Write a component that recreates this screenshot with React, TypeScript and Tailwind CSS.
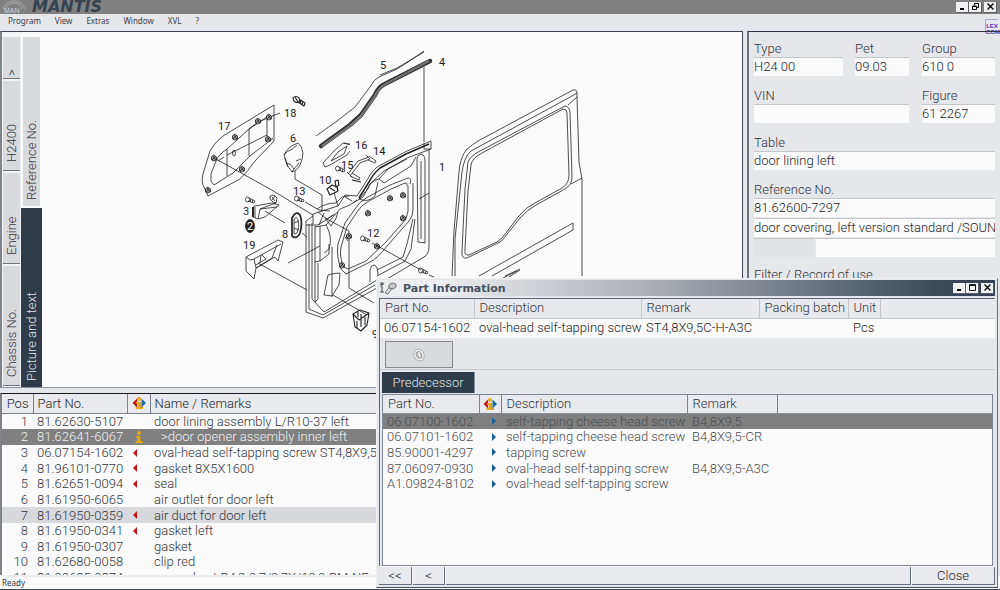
import React, { useId } from 'react';

type Mark = 'info' | 'prev' | 'next' | 'none';

const parts: { pos: string; no: string; mark: Mark; name: string }[] = [
  { pos: '1', no: '81.62630-5107', mark: 'none', name: 'door lining assembly L/R10-37 left' },
  { pos: '2', no: '81.62641-6067', mark: 'info', name: '>door opener assembly inner left' },
  { pos: '3', no: '06.07154-1602', mark: 'prev', name: 'oval-head self-tapping screw ST4,8X9,5C' },
  { pos: '4', no: '81.96101-0770', mark: 'prev', name: 'gasket 8X5X1600' },
  { pos: '5', no: '81.62651-0094', mark: 'prev', name: 'seal' },
  { pos: '6', no: '81.61950-6065', mark: 'none', name: 'air outlet for door left' },
  { pos: '7', no: '81.61950-0359', mark: 'prev', name: 'air duct for door left' },
  { pos: '8', no: '81.61950-0341', mark: 'prev', name: 'gasket left' },
  { pos: '9', no: '81.61950-0307', mark: 'none', name: 'gasket' },
  { pos: '10', no: '81.62680-0058', mark: 'none', name: 'clip red' },
  { pos: '11', no: '81.90685-0374', mark: 'none', name: 'expand nut B4,2-9,7/9,7X/10,0-BM-NF' },
];

const predecessors = [
  { no: '06.07100-1602', name: 'self-tapping cheese head screw', remark: 'B4,8X9,5' },
  { no: '06.07101-1602', name: 'self-tapping cheese head screw', remark: 'B4,8X9,5-CR' },
  { no: '85.90001-4297', name: 'tapping screw', remark: '' },
  { no: '87.06097-0930', name: 'oval-head self-tapping screw', remark: 'B4,8X9,5-A3C' },
  { no: 'A1.09824-8102', name: 'oval-head self-tapping screw', remark: '' },
];

function InfoGlyph() {
  return (
    <g>
      <circle cx="7" cy="2" r="2" fill="#e3ab1c" />
      <path d="M4 5h4.500v5H11v2H3.500v-2H5.500V6.500H4z" fill="#e3ab1c" />
      <path d="M8.500 5v5H11" fill="none" stroke="#a37a22" strokeWidth="0.600" />
    </g>
  );
}

function MarkIcon({ kind }: { kind: Mark | 'both' }) {
  if (kind === 'none') return null;
  return (
    <svg viewBox="0 0 14 12" className="mx-auto block h-3 w-3.5" aria-hidden="true">
      {kind === 'both' && (
        <>
          <path d="M5 1.500v9L.500 6z" fill="#c4161c" />
          <path d="M9.500 1.500v9L14 6z" fill="#1b6fa0" />
        </>
      )}
      {kind === 'prev' && <path d="M5 2v8L1 6z" fill="#c4161c" />}
      {kind === 'next' && <path d="M9 2v8l4-4z" fill="#175f94" />}
      {(kind === 'info' || kind === 'both') && <InfoGlyph />}
    </svg>
  );
}

function WindowButtons({ restore = false }: { restore?: boolean }) {
  const box =
    'flex h-[11px] w-[13px] items-center justify-center border-r border-b border-[#5d6167] bg-[#f0f0f0]';
  return (
    <div className="flex shrink-0 items-center">
      <button className={box} aria-label="Minimize">
        <svg viewBox="0 0 9 9" className="h-[9px] w-[9px]"><path d="M2 6h4v2H2z" /></svg>
      </button>
      <button className={box} aria-label="Restore">
        <svg viewBox="0 0 9 9" className="h-[9px] w-[9px]">
          {restore ? (
            <path d="M3.500 3V1.500h4v4H6M3.500 1.500h4M1.500 4.500h4v3h-4zM1.500 4h4" fill="none" stroke="#000" />
          ) : (
            <path d="M1.500 1.500h6v6h-6zM1.500 2.500h6" fill="none" stroke="#000" strokeWidth="0.900" />
          )}
        </svg>
      </button>
      <button className={`${box} ml-0.5`} aria-label="Close window">
        <svg viewBox="0 0 9 9" className="h-[9px] w-[9px]"><path d="M1.500 1.500l6 6M7.500 1.500l-6 6" fill="none" stroke="#000" strokeWidth="1.300" /></svg>
      </button>
    </div>
  );
}

function SideTab({ label, className }: { label: string; className: string }) {
  return (
    <button
      className={`flex items-center justify-start whitespace-nowrap text-[13px] leading-4 [writing-mode:vertical-rl] rotate-180 ${className}`}
    >
      {label}
    </button>
  );
}

const inputClass =
  'block h-[19px] w-full min-w-0 border-t border-[#c3c5c8] bg-[#fbfbfb] pb-0.5 text-[13px] leading-4 text-[#222429] outline-none';

function Field({ label, value, className = '' }: { label: string; value: string; className?: string }) {
  const id = useId();
  return (
    <div className={`min-w-0 ${className}`}>
      <label htmlFor={id} className="block h-[17px] text-[13px] leading-[17px] text-[#33363b]">{label}</label>
      <input id={id} defaultValue={value} className={inputClass} />
    </div>
  );
}

function Screw({ x, y }: { x: number; y: number }) {
  return (
    <g transform={`translate(${x} ${y})`}>
      <ellipse cx="1.500" cy="1.500" rx="2" ry="2.500" />
      <path d="M3 0l6 3-1 2-6-2M5 1l-1 3M7 2l-1 3" />
    </g>
  );
}

function Bolt({ x, y }: { x: number; y: number }) {
  return (
    <g transform={`translate(${x} ${y})`}>
      <path d="M-2.500-1l2-2 3 2v3l-3 1-2-1z" fill="#999" />
      <path d="M-2 2l4-4M-1-2l3 4" />
    </g>
  );
}

function Drawing() {
  const labels: [string, number, number][] = [
    ['17', 218, 131], ['18', 284, 118], ['6', 290, 143], ['13', 293, 196], ['3', 243, 216],
    ['8', 282, 239], ['19', 243, 250], ['5', 380, 70], ['4', 439, 67], ['16', 355, 150],
    ['14', 373, 156], ['15', 341, 170], ['10', 319, 185], ['1', 439, 172], ['12', 367, 238], ['9', 372, 339],
  ];
  return (
    <svg viewBox="0 0 700 355" className="block h-[355px] w-[700px] shrink-0" role="img" aria-label="Exploded view of the door lining">
      <g transform="translate(-42 -33)" fill="none" stroke="#222" strokeWidth="0.800" strokeLinejoin="round">
        <path d="M274 106L223 137Q214 144 210 152L203 175Q201 184 204 188L208 197L240 180Q248 172 255 162L274 142V106" />
        <path d="M267 118L249 130L227 150Q218 156 216 162L211 175V182L214 186L233 174L250 157L268 143L273 139M267 118V137M249 130V157M227 150V177M218 162L224 158M227 156L267 136M249 130L258 123L280 114" />
        <ellipse cx="234" cy="154" rx="1.500" ry="3" />
        <Bolt x={258} y={122} /><Bolt x={269} y={118} /><Bolt x={235} y={138} /><Bolt x={214} y={159} />
        <Bolt x={268} y={140} /><Bolt x={242} y={170} /><Bolt x={208} y={191} />
        <path d="M216 160L270 190L313 216" />
        <path d="M293 99q3-3 6 0l1 3q-3 3-6 0zM295 98l3 5M299 100l6 4-1 3-6-4M301 101l-1 4M303 102l-1 4" strokeWidth="1.100" />
        <path d="M298 144Q288 147 284 156L287 166L292 173Q297 172 300 166Q303 159 303 154Q302 147 298 144M284 156Q288 151 291 151L297 146M286 164Q291 164 294 170L299 164M294 170L292 173M285 159L288 168M296 162L301 160" />
        <path d="M295 172V180L322 196V212" />
        <Screw x={246} y={199} /><Screw x={295} y={198} />
        <path d="M305 203L319 211L330 212" />
        <path d="M270 197l4-1 3 3-1 5-3-1-3-3zM272 198l3 4M275 197l-3 4" />
        <path d="M253 208V218L258 220L265 218L279 206L272 204L255 207zM255 208V219M258 220L260 210L276 204M260 210L277 208M265 212L285 224" />
        <path d="M253 208V218" strokeWidth="2" />
        <ellipse cx="250" cy="227" rx="4.500" ry="6.500" fill="#222" />
        <path d="M292 237V219Q296 211 300 216Q303 224 300 234Q297 241 292 237z" strokeWidth="1.700" />
        <path d="M294 235V220Q297 217 298 221Q300 228 297 234zM294 224l5-2M294 229l5 2M302 234L307 238" />
        <path d="M246 258Q259 251 278 241L283 243L278 262L275 258L256 269L254 280L246 272zM246 258L250 261L254 260L281 245M254 260L256 269L272 259L277 246M261 256L260 264M256 266L266 260L262 256M258 264L307 291" />
        <path d="M288 264L320 247" />

        <path d="M424 52L421 54L408 63L397 70L379 78Q374 80 370 88L355 108L337 122L316 137M424 53L409 62L397 69L380 76" />
        <path d="M430 62L383 86Q378 89 375 96L361 116L350 126L321 147" strokeWidth="4.500" stroke="#333" strokeLinecap="round" />
        <path d="M429 62L384 86Q379 89 375 97L361 117L350 127L322 147" strokeWidth="1.800" stroke="#aaa" />
        <path d="M429 62L384 86Q379 89 375 97L361 117L350 127L322 147" strokeWidth="0.700" stroke="#333" />
        <path d="M424 68V143" />
        <path d="M350 145L343 144L334 152L323 164L325 168L330 166L347 156L350 152M347 147L338 153L331 162L344 155zM344 144L350 146" />
        <Screw x={336} y={168} />
        <path d="M348 175L358 162L369 158M350 177L360 164L370 160M347 173l5 5M352 174l8 5-1 2-9-4M366 156l4 4M369 157l7 5-1 2-7-3" />
        <path d="M352 181L361 183M327 190l5-4 5 2 1 4-8 4zM335 182l3-1 1 5-3 2zM330 189l5 3" strokeWidth="1.200" />
        <path d="M334 194L338 207" />

        <path d="M431 142L407 152L377 168Q371 173 367 181L357 197M431 142V150L407 159L384 172L370 185L363 198L353 204" />
        <path d="M429 145L406 155L380 169Q373 175 369 183L359 199" strokeWidth="1.500" />
        <path d="M424 144V150M424 150H431M429 151V248Q429 255 424 258L377 286M417 160Q417 156 421 155Q425 156 425 162V244L418 243L417 160M421 162V240M410 185Q412 179 408 179L390 186L366 199Q359 203 355 210L345 224L338 245Q336 257 341 270L346 275L370 263Q377 260 388 246L409 222Q413 218 413 210V184M407 187Q408 184 405 184L391 190L369 202Q361 206 357 213L347 228L341 248Q339 258 344 268L348 270L366 262L386 243L406 220L408 212V187" />
        <path d="M407 160L388 170L379 180L384 184L411 167L416 158M379 180Q370 182 368 190L359 200Q368 204 375 197L378 183M345 198L352 202" />
        <path d="M357 197L345 196L338 207L325 211L313 215V225M357 201L350 206L340 210L326 226L315 228" />
        <path d="M313 217L306 222V313L323 319L377 289M309 225V310L323 316L375 286M312 224V300L324 313L377 281M315 227V263L320 262L329 255V245M320 227V262M326 226Q333 238 329 250L324 254M315 263V303L318 300V264M332 248V298M306 226H318L335 215M325 219L349 232V289L374 304M345 238L348 242M324 214L319 226" />
        <path d="M338 213Q337 220 331 227L325 219M328 276L324 296L332 297L339 286L340 274Q334 274 328 276M333 296L367 316" />
        <path d="M413 220L407 245L403 258L377 271M415 220L411 250L405 262L377 277M370 283V271Q371 266 374 266Q378 267 378 276M429 194L419 200" />
        <path d="M317 210Q325 204 336 204L342 198L349 197M318 213L327 220L333 216" />
        <Bolt x={368} y={214} /><Bolt x={390} y={199} /><Bolt x={403} y={196} /><Bolt x={403} y={219} />
        <Bolt x={377} y={247} /><Bolt x={342} y={266} /><Bolt x={349} y={237} />
        <Screw x={361} y={238} /><Screw x={419} y={270} />
        <path d="M372 244L421 271M429 276L434 278" />
        <path d="M353 315L360 311L369 314L367 326L361 332L355 328zM353 315L359 321L369 314M358 313V318M361 315V328M357 322V329M365 318V326" strokeWidth="1.100" />

        <path d="M452 277L454 232L459 173Q460 158 467 150Q472 146 478 142L573 91Q577 90 577 94V98L568 106M455 277V240L462 173Q464 158 471 152L572 97L577 94M577 98L579 163L582 180V277M571 185L582 179" />
        <path d="M565 107L480 152Q470 157 468 163L465 190L462 252Q461 260 467 259L500 243Q504 240 508 234L520 219Q527 211 536 206L565 190Q572 186 572 178L570 113Q569 107 565 107" />
        <path d="M563 110L482 154Q472 159 471 166L468 192L465 250Q464 257 469 256L497 243Q502 240 506 234L518 218Q526 208 535 204L562 189Q569 185 569 176L567 114Q567 110 563 110" />
        <path d="M479 277L573 224V231L492 277M505 277L520 270M509 278L520 271M503 279L517 272" />
      </g>
      <g transform="translate(-42 -33)" className="fill-[#222] font-['Roboto'] text-[11px] font-normal">
        {labels.map(([t, x, y]) => (
          <text key={t} x={x} y={y}>{t}</text>
        ))}
        <text x="247" y="231" className="fill-white">2</text>
      </g>
    </svg>
  );
}

function PartInformation() {
  const head = 'border-r border-[#c5c7cb] p-0 pb-0.5 pl-[5px] text-left font-light';
  const head2 = 'border-r border-b border-[#7a8291] border-b-[#8b90a0] p-0 pl-[5px] text-left font-light';
  const nav =
    'flex h-[18px] items-center justify-center border-r border-b border-[#65707e] bg-[#e9eaed] text-[#222429]';
  return (
    <section
      role="dialog"
      aria-label="Part Information"
      className="absolute top-[278px] right-0.5 bottom-0.5 left-[376px] flex flex-col border border-[#eef0f3] border-r-[#687080] border-b-[#424c5e] bg-[#e6e7eb] p-0.5 pt-px"
    >
      <header className="flex h-4 shrink-0 items-center bg-linear-to-r from-[#eceef0] from-10% via-[#a9adb3] via-45% to-[#344252] to-95% pr-px">
        <svg viewBox="0 0 18 14" className="h-3.5 w-[18px]" aria-hidden="true">
          <path d="M1 5h2v6M1 11h4M2 2h2v1.500H2z" fill="none" stroke="#555" strokeWidth="1.200" />
          <path d="M6 12l5-7 3 1-5 7z" fill="#ddd" stroke="#777" />
          <path d="M10 4l3-2 4 1v3l-3 2-4-1z" fill="#c8c8c8" stroke="#777" />
        </svg>
        <h2 className="ml-1.5 flex-1 font-['DejaVu_Sans'] text-[11px] font-bold text-[#47505c]">Part Information</h2>
        <WindowButtons />
      </header>
      <div className="mt-0.5 flex min-h-0 flex-1 flex-col border-t border-l border-[#5d647b]">
        <table className="w-full shrink-0 table-fixed border-collapse bg-[#fbfbfb]">
          <colgroup>
            <col className="w-[94px]" /><col className="w-[167px]" /><col className="w-[118px]" /><col className="w-[89px]" /><col className="w-8" /><col />
          </colgroup>
          <thead>
            <tr className="h-[19px] border-b border-[#c5c7cb] bg-[#e8e9ec]">
              <th className={head}>Part No.</th>
              <th className={head}>Description</th>
              <th className={head}>Remark</th>
              <th className={`${head} whitespace-nowrap`}>Packing batch</th>
              <th className={head}>Unit</th>
              <th className="p-0" />
            </tr>
          </thead>
          <tbody>
            <tr className="h-5 whitespace-nowrap text-[#222429]">
              <td className="p-0 pb-0.5 pl-1">06.07154-1602</td>
              <td className="p-0 pb-0.5 pl-[5px]">oval-head self-tapping screw</td>
              <td className="p-0 pb-0.5 pl-[5px]">ST4,8X9,5C-H-A3C</td>
              <td className="p-0" />
              <td className="p-0 pb-0.5 pl-[5px]">Pcs</td>
              <td className="p-0" />
            </tr>
          </tbody>
        </table>
        <div className="shrink-0 border-b border-[#c8cacd] pt-[3px] pb-px pl-[5px]">
          <button aria-label="Show record" className="flex h-[27px] w-[68px] items-center justify-center border border-[#858990] bg-[#d9dadc]">
            <svg viewBox="0 0 14 14" className="h-3.5 w-3.5">
              <ellipse cx="7" cy="7" rx="5" ry="6" fill="#f5f5f5" stroke="#b4b4b4" transform="rotate(-30 7 7)" />
              <ellipse cx="7" cy="7" rx="2.500" ry="3.500" fill="#ccc" stroke="#999" transform="rotate(-30 7 7)" />
              <path d="M7 4l1 5" stroke="#fff" />
            </svg>
          </button>
        </div>
        <div className="shrink-0 pt-0.5 pl-0.5">
          <button className="block h-[21px] w-[93px] border-r border-[#8c93a0] bg-[#2f3b48] text-[#dfe2e6]">Predecessor</button>
        </div>
        <div className="mx-0.5 mt-px min-h-0 flex-1 border border-[#80869a] bg-[#fbfbfb]">
          <table className="w-full table-fixed border-collapse">
            <colgroup>
              <col className="w-24" /><col className="w-[22px]" /><col className="w-[186px]" /><col className="w-[90px]" /><col />
            </colgroup>
            <thead>
              <tr className="h-[18px] bg-[#e9eaed]">
                <th className={head2}>Part No.</th>
                <th className="border-r border-b border-[#7a8291] p-0"><MarkIcon kind="both" /></th>
                <th className={head2}>Description</th>
                <th className={head2}>Remark</th>
                <th className="border-b border-[#8b90a0] p-0" />
              </tr>
            </thead>
          </table>
          <table className="h-[78px] w-full table-fixed border-collapse text-[#4a4d52]">
            <colgroup>
              <col className="w-24" /><col className="w-[22px]" /><col className="w-[186px]" /><col className="w-[90px]" /><col />
            </colgroup>
            <tbody>
              {predecessors.map((p, i) => (
                <tr key={p.no} className={i === 0 ? 'bg-[#808080]' : ''}>
                  <td className="p-0 pl-1 whitespace-nowrap">{p.no}</td>
                  <td className="p-0"><MarkIcon kind="next" /></td>
                  <td className="p-0 pl-[5px] whitespace-nowrap">{p.name}</td>
                  <td className="p-0 pl-[5px] whitespace-nowrap">{p.remark}</td>
                  <td className="p-0" />
                </tr>
              ))}
            </tbody>
          </table>
        </div>
      </div>
      <footer className="flex shrink-0 gap-px bg-[#fbfbfb] pt-px">
        <button className={`${nav} w-[33px]`}>&lt;&lt;</button>
        <button className={`${nav} w-8`}>&lt;</button>
        <div className="flex-1 border-r border-b border-[#65707e] bg-[#e9eaed]" />
        <button className={`${nav} w-[83px]`}>Close</button>
      </footer>
    </section>
  );
}

export default function App() {
  const th = 'border-r border-b border-[#7a8291] p-0 font-light text-[#222429]';
  return (
    <div className="relative flex h-screen flex-col overflow-hidden bg-[#e6e7eb] font-['Roboto','Liberation_Sans',sans-serif] text-[13px] leading-[15px] font-light text-[#33363b]">
      <header className="flex h-3.5 shrink-0 items-center bg-[#808080] pr-[3px]">
        <svg viewBox="0 0 26 14" className="ml-0.5 h-3.5 w-[26px] shrink-0" role="img" aria-label="MAN">
          <path d="M1 9Q4 1 12 1t11 8M4 9Q6 3 12 3t8 6" fill="none" stroke="#b9b9b9" strokeWidth="0.800" />
          <text x="2" y="13" fontSize="7" className="fill-[#d0d0d0] font-['Liberation_Sans']">MAN</text>
        </svg>
        <h1 className="ml-1 flex-1 font-['DejaVu_Sans'] text-[16px] leading-5 font-bold text-[#36424f] italic">MANTIS</h1>
        <WindowButtons restore />
      </header>
      <div className="flex h-[17px] shrink-0 items-start justify-between">
        <nav className="flex gap-3.5 pl-2 font-['Noto_Sans'] text-[8px] leading-[13px] font-normal text-[#3c4046]">
          <button>Program</button>
          <button>View</button>
          <button>Extras</button>
          <button>Window</button>
          <button>XVL</button>
          <button>?</button>
        </nav>
        <div className="mt-[5px] mr-0.5 h-[15px] w-[13px] shrink-0 border-t border-l border-[#a9a3dc] pt-[3px] text-center font-['Liberation_Sans'] text-[6px] leading-[6px] font-bold text-[#4a2fb5]">
          LEX COM
        </div>
      </div>
      <div className="flex min-h-0 flex-1">
        <div className="flex min-w-0 flex-1 flex-col">
          <section className="flex h-[357px] shrink-0 overflow-hidden border border-l-2 border-[#3a4252] border-b-[#8b95a2] border-l-[#808388] bg-[#fbfbfb]">
            <div className="flex w-[19px] shrink-0 flex-col gap-0.5 bg-[#f2f3f5] px-px pt-[5px] pb-px">
              <SideTab label=">" className="h-[42px] w-[17px] border-t border-[#6d737c] bg-[#d9dadd] pt-0.5" />
              <SideTab label="H2400" className="h-[90px] w-[17px] border-t border-[#6d737c] bg-[#d9dadd] pt-2" />
              <SideTab label="Engine" className="h-[91px] w-[17px] border-t border-[#6d737c] bg-[#d9dadd] pt-2" />
              <SideTab label="Chassis No." className="w-[17px] flex-1 border-t border-[#6d737c] bg-[#d9dadd] pt-2" />
            </div>
            <div className="flex w-[21px] shrink-0 flex-col pt-[5px]">
              <SideTab label="Reference No." className="ml-0.5 h-[169px] w-[17px] bg-[#d9dadd] pt-1.5" />
              <SideTab label="Picture and text" className="mt-0.5 w-full flex-1 bg-[#2f3b48] pt-1.5 text-[#e4e6ea]" />
            </div>
            <Drawing />
          </section>
          <section className="mt-[5px] flex min-h-0 flex-1 flex-col overflow-hidden border-t border-r border-l-2 border-t-[#15181d] border-r-[#5d647b] border-l-[#808388] bg-[#fbfbfb]">
            <table className="w-full shrink-0 table-fixed border-collapse">
              <colgroup><col className="w-[31px]" /><col className="w-[94px]" /><col className="w-[23px]" /><col /></colgroup>
              <thead>
                <tr className="h-[19px] bg-[#e9eaed]">
                  <th className={`${th} pr-1 text-right`}>Pos</th>
                  <th className={`${th} pl-1 text-left`}>Part No.</th>
                  <th className={th}><MarkIcon kind="both" /></th>
                  <th className={`${th} pl-1 text-left`}>Name / Remarks</th>
                </tr>
              </thead>
            </table>
            <table className="h-[172px] w-full shrink-0 table-fixed border-collapse">
              <colgroup><col className="w-[31px]" /><col className="w-[94px]" /><col className="w-[23px]" /><col /></colgroup>
              <tbody>
                {parts.map((p) => (
                  <tr
                    key={p.pos}
                    className={p.pos === '2' ? 'bg-[#808080] text-[#f2f2f2]' : p.pos === '7' ? 'bg-[#d8d9dd]' : ''}
                  >
                    <td className="p-0 pr-[5px] text-right">{p.pos}</td>
                    <td className="p-0 pl-1 whitespace-nowrap">{p.no}</td>
                    <td className="p-0"><MarkIcon kind={p.mark} /></td>
                    <td className={`p-0 whitespace-nowrap ${p.pos === '2' ? 'pl-[11px]' : 'pl-1'}`}>{p.name}</td>
                  </tr>
                ))}
              </tbody>
            </table>
          </section>
        </div>
        <aside className="ml-1 flex w-[253px] shrink-0 flex-col gap-[11px] border-t border-l-2 border-t-[#2f3545] border-l-[#6f737a] pt-2 pr-[5px] pl-[5px]">
          <div className="flex">
            <Field label="Type" value="H24 00" className="w-[89px]" />
            <Field label="Pet" value="09.03" className="ml-3 w-[54px]" />
            <Field label="Group" value="610 0" className="ml-[13px] flex-1" />
          </div>
          <div className="flex gap-[13px]">
            <Field label="VIN" value="" className="w-[155px]" />
            <Field label="Figure" value="61 2267" className="flex-1" />
          </div>
          <Field label="Table" value="door lining left" />
          <div className="flex flex-col gap-px">
            <Field label="Reference No." value="81.62600-7297" />
            <input aria-label="Reference description" className={inputClass} defaultValue="door covering, left version standard /SOUN" />
            <div className="flex gap-px">
              <div className="w-[61px] shrink-0 border-t border-[#c3c5c8] bg-[#e0e2e6]" />
              <input aria-label="Additional reference" className={inputClass} />
            </div>
          </div>
          <div className="-mt-px">Filter / Record of use</div>
        </aside>
      </div>
      <footer className="h-[15px] shrink-0 border-t-2 border-b border-t-[#eceded] border-b-[#424c5e] bg-[#fbfbfb] pl-0.5 font-['Noto_Sans'] text-[8px] leading-[11px] font-normal">
        Ready
      </footer>
      <PartInformation />
    </div>
  );
}
